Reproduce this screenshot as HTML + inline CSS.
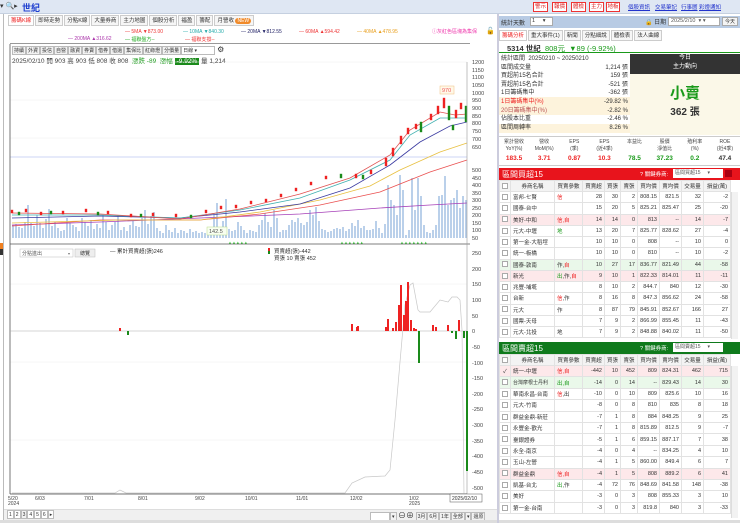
<!DOCTYPE html>
<html><head><meta charset="utf-8">
<style>
*{margin:0;padding:0;box-sizing:border-box}
body{width:740px;height:523px;overflow:hidden;background:#fff;font-family:"Liberation Sans","Noto Sans CJK TC",sans-serif;font-size:7px;color:#333;position:relative}
.a{position:absolute;white-space:nowrap}
.btn{position:absolute;top:2px;height:10px;border:1px solid #e33;background:#fff;color:#d22;font-size:5.5px;line-height:8px;text-align:center;overflow:hidden}
.lnk{position:absolute;top:3px;color:#2233cc;text-decoration:underline;font-size:5.5px}
.tab{display:inline-block;height:11px;line-height:10px;padding:0 2px;border:1px solid #ccc;background:#f6f6f6;font-size:5.5px;margin-right:1px}
.tb{display:inline-block;height:9px;line-height:8px;padding:0 1px;border:1px solid #bbb;background:#f2f2f2;font-size:5px}
table{border-collapse:collapse;table-layout:fixed;position:absolute;left:499px;width:231px;font-size:5.5px}
td{border:1px solid #e2e2e2;padding:0 2px;text-align:right;overflow:hidden;white-space:nowrap}
td.l{text-align:left}
td.c{text-align:center}
.th td{background:#f3f3f3;text-align:center;height:11px;padding:0}
.r{color:#e22}.g{color:#1a9a1a}
.pk td{background:#fde8ea}.gn td{background:#eaf8ea}
.cb{display:inline-block;width:6px;height:6px;border:1px solid #aaa;background:#fff;vertical-align:middle}
</style></head><body>
<div class="a" style="left:0;top:0;width:740px;height:14px;background:#dfe7f3;border-bottom:1px solid #c5d0e0"></div>
<div class="a" style="left:0;top:2px;font-size:7px">▾ 🔍▸</div>
<div class="a" style="left:22px;top:1px;color:#1f3fcf;font-size:9px;font-weight:bold">世紀</div>
<div class="btn" style="left:533px;width:15px">警示</div>
<div class="btn" style="left:552px;width:15px">報價</div>
<div class="btn" style="left:571px;width:15px">體檢</div>
<div class="btn" style="left:589px;width:15px">主力</div>
<div class="btn" style="left:606px;width:14px">地板</div>
<div class="lnk" style="left:628px">個股資訊</div>
<div class="lnk" style="left:655px">交易筆記</div>
<div class="lnk" style="left:681px">行事曆</div>
<div class="lnk" style="left:699px">彩燈通知</div>

<div class="a" style="left:3px;top:14px;width:1px;height:509px;background:#bbb"></div>
<div class="a" style="left:0;top:243px;width:3px;height:6px;background:#f08020"></div>
<div class="a" style="left:0;top:249px;width:3px;height:6px;background:#333"></div>
<div class="a" style="left:8px;top:15px"><span class="tab" style="color:#e22;background:#fff">籌碼K線</span><span class="tab">即時走勢</span><span class="tab">分點K線</span><span class="tab">大量券商</span><span class="tab">主力地圖</span><span class="tab">個股分析</span><span class="tab">福盈</span><span class="tab">籌配</span><span class="tab">月營收 <span style="background:#f08a2a;color:#fff;border-radius:4px;padding:0 2px;font-size:5px">NEW</span></span></div>
<div class="a" style="left:125px;top:29px;font-size:5px;color:#e33">— 5MA ▼873.00</div>
<div class="a" style="left:183px;top:29px;font-size:5px;color:#2aa">— 10MA ▼840.30</div>
<div class="a" style="left:241px;top:29px;font-size:5px;color:#226">— 20MA ▼812.55</div>
<div class="a" style="left:299px;top:29px;font-size:5px;color:#e33">— 60MA ▲594.42</div>
<div class="a" style="left:357px;top:29px;font-size:5px;color:#e9a020">— 40MA ▲478.95</div>
<div class="a" style="left:432px;top:28px;font-size:5px;color:#e3a">ⓘ灰紅色區塊為集保</div>
<div class="a" style="left:486px;top:27px;font-size:7px">🔓</div>
<div class="a" style="left:68px;top:36px;font-size:5px;color:#a3a">— 200MA ▲316.62</div>
<div class="a" style="left:125px;top:36px;font-size:5px;color:#2a2">— 福聯盤方--</div>
<div class="a" style="left:185px;top:36px;font-size:5px;color:#e33">— 福聯支撐--</div>
<div class="a" style="left:10px;top:43px;width:460px;height:1px;background:#999"></div>
<div class="a" style="left:12px;top:45px"><span class="tb">持續</span><span class="tb">外資</span><span class="tb">投信</span><span class="tb">自營</span><span class="tb">融資</span><span class="tb">券賣</span><span class="tb">借券</span><span class="tb">借還</span><span class="tb">集保比</span><span class="tb">紅綠燈</span><span class="tb">分價量</span><span class="tb" style="width:34px;background:#fff">日線 ▾</span> <span style="font-size:8px">⚙</span></div>
<div class="a" style="left:12px;top:55px;font-size:6.5px">2025/02/10 開 903 高 903 低 808 收 808 &nbsp;<span class="g">漲跌 -89 &nbsp;漲幅</span> <span style="background:#1a8a1a;color:#fff;padding:0 2px">-9.92%</span> 量 1,214</div>

<svg class="a" style="left:0;top:0" width="497" height="523">
<g stroke="#eee" stroke-width="0.5"><line x1="10" y1="62" x2="467" y2="62"/><line x1="10" y1="100" x2="467" y2="100"/><line x1="10" y1="138" x2="467" y2="138"/><line x1="10" y1="284" x2="467" y2="284"/><line x1="10" y1="362" x2="467" y2="362"/><line x1="10" y1="440" x2="467" y2="440"/></g>
<line x1="10" y1="157" x2="467" y2="157" stroke="#bcc8f0" stroke-width="0.7"/>
<path stroke="#a9c4e4" stroke-width="1.6" d="M13 238V225M16 238V224M19 238V227M22 238V228M25 238V222M28 238V205M31 238V223M34 238V226M37 238V215M40 238V223M43 238V228M46 238V219M49 238V209M52 238V226M55 238V222M58 238V228M61 238V231M64 238V230M67 238V218M70 238V223M73 238V225M76 238V227M79 238V231M82 238V218M85 238V222M88 238V226M91 238V220M94 238V229M97 238V224M100 238V228M103 238V215M106 238V222M109 238V230M112 238V225M115 238V222M118 238V215M121 238V230M124 238V227M127 238V231M130 238V225M133 238V221M136 238V226M139 238V227M142 238V218M145 238V210M148 238V224M151 238V216M154 238V212M157 238V228M160 238V231M163 238V233M166 238V225M169 238V230M172 238V232M175 238V228M178 238V233M181 238V230M184 238V231M187 238V233M190 238V229M193 238V232M196 238V231M199 238V233M202 238V232M205 238V233M208 238V231M211 238V229M214 238V215M217 238V203M220 238V228M223 238V221M226 238V199M229 238V229M232 238V231M235 238V230M238 238V222M241 238V226M244 238V230M247 238V233M250 238V230M253 238V231M256 238V232M259 238V225M262 238V220M265 238V213M268 238V222M271 238V227M274 238V210M277 238V218M280 238V232M283 238V230M286 238V230M289 238V225M292 238V220M295 238V222M298 238V218M301 238V223M304 238V225M307 238V222M310 238V210M313 238V215M316 238V207M319 238V221M322 238V229M325 238V230M328 238V232M331 238V231M334 238V229M337 238V228M340 238V229M343 238V227M346 238V231M349 238V229M352 238V223M355 238V226M358 238V220M361 238V228M364 238V226M367 238V230M370 238V230M373 238V229M376 238V221M379 238V228M382 238V233M385 238V224M388 238V185M391 238V200M394 238V205M397 238V215M400 238V175M403 238V190M406 238V235M409 238V230M412 238V178M415 238V210M418 238V178M421 238V196M424 238V225M427 238V232M430 238V233M433 238V230M436 238V225M439 238V196M442 238V195M445 238V176M448 238V205M451 238V200M454 238V198M457 238V190M460 238V208M463 238V196M466 238V200"/>
<polyline fill="none" stroke="#a640b8" stroke-width="0.8" points="12,225 100,222 200,218 300,214 380,208 430,205 467,203"/>
<polyline fill="none" stroke="#ea5050" stroke-width="0.8" points="12,226 100,220 200,220 260,214 320,205 380,192 430,172 467,160"/>
<polyline fill="none" stroke="#e8c040" stroke-width="0.8" points="12,223 120,220 200,220 260,212 320,200 370,186 400,170 440,152 467,143"/>
<polyline fill="none" stroke="#3a3aa0" stroke-width="0.8" points="12,218 100,216 180,218 240,212 300,204 350,188 390,165 420,142 450,126 467,122"/>
<polyline fill="none" stroke="#40b0b0" stroke-width="0.8" points="12,215 100,215 180,218 240,210 300,198 350,180 390,160 410,135 440,118 467,118"/>
<polyline fill="none" stroke="#e05050" stroke-width="0.8" points="12,213 100,214 180,219 240,209 300,194 350,178 390,155 410,130 440,112 455,115 467,114"/>
<g fill="#e22" stroke="#e22" stroke-width="0.4">
<rect x="11" y="210" width="2" height="3"/><rect x="25" y="209" width="2" height="3"/><rect x="40" y="212" width="2" height="3"/><rect x="62" y="211" width="2" height="3"/><rect x="85" y="209" width="2" height="3"/><rect x="107" y="211" width="2" height="3"/><rect x="130" y="214" width="2" height="3"/><rect x="152" y="213" width="2" height="3"/><rect x="175" y="214" width="2" height="3"/><rect x="205" y="210" width="2" height="3"/><rect x="220" y="206" width="2" height="3"/><rect x="235" y="205" width="2" height="3"/><rect x="250" y="201" width="2" height="3"/><rect x="265" y="199" width="2" height="3"/><rect x="280" y="194" width="2" height="3"/><rect x="295" y="188" width="2" height="3"/><rect x="310" y="182" width="2" height="3"/><rect x="325" y="176" width="2" height="3"/><rect x="355" y="174" width="2" height="4"/><rect x="370" y="170" width="2" height="4"/><rect x="385" y="158" width="2" height="8"/><rect x="392" y="148" width="2" height="8"/><rect x="400" y="136" width="2" height="8"/><rect x="407" y="128" width="2" height="6"/><rect x="415" y="124" width="2" height="5"/><rect x="430" y="114" width="2" height="6"/><rect x="437" y="106" width="2" height="8"/><rect x="443" y="98" width="2" height="10"/><rect x="455" y="110" width="2" height="8"/><rect x="460" y="103" width="2" height="6"/>
</g>
<g fill="#1a8a1a" stroke="#1a8a1a" stroke-width="0.4">
<rect x="18" y="212" width="2" height="3"/><rect x="50" y="211" width="2" height="3"/><rect x="97" y="212" width="2" height="3"/><rect x="140" y="214" width="2" height="3"/><rect x="190" y="215" width="2" height="3"/><rect x="340" y="174" width="2" height="4"/><rect x="362" y="175" width="2" height="4"/><rect x="420" y="122" width="2" height="10"/><rect x="448" y="106" width="2" height="14"/><rect x="452" y="125" width="2" height="5"/><rect x="465" y="106" width="2" height="16"/>
</g>
<rect x="440" y="86" width="14" height="8" fill="#fff8e8" stroke="#f0c080" stroke-width="0.5"/><text x="442" y="92" font-size="5.5" fill="#e55">970</text>
<rect x="207" y="227" width="20" height="8" fill="#f8fff0" stroke="#bd8" stroke-width="0.5"/><text x="209" y="233" font-size="5.5" fill="#555">142.5</text>
<g fill="#3c3" font-size="4"><text x="228" y="244">▲▲▲▲▲</text><text x="340" y="244">▲▲▲▲▲▲</text><text x="400" y="244">▲▲▲▲▲▲▲</text></g>
<line x1="10" y1="244" x2="470" y2="244" stroke="#555" stroke-width="0.8"/>
<line x1="467" y1="62" x2="467" y2="494" stroke="#999" stroke-width="0.6"/>
<line x1="10" y1="44" x2="10" y2="494" stroke="#555" stroke-width="0.8"/>
<line x1="10" y1="494" x2="467" y2="494" stroke="#444" stroke-width="0.8"/>
<g font-size="5.5" fill="#444">
<text x="472" y="64">1200</text><text x="472" y="72">1150</text><text x="472" y="79">1100</text><text x="472" y="87">1050</text><text x="472" y="95">1000</text><text x="472" y="102">950</text><text x="472" y="110">900</text><text x="472" y="118">850</text><text x="472" y="125">800</text><text x="472" y="133">750</text><text x="472" y="141">700</text><text x="472" y="149">650</text><text x="472" y="172">500</text><text x="472" y="180">450</text><text x="472" y="187">400</text><text x="472" y="195">350</text><text x="472" y="202">300</text><text x="472" y="210">250</text><text x="472" y="217">200</text><text x="472" y="225">150</text><text x="472" y="232">100</text><text x="472" y="240">50</text>
<text x="472" y="255">250</text><text x="472" y="271">200</text><text x="472" y="286">150</text><text x="472" y="302">100</text><text x="472" y="318">50</text><text x="472" y="333">0</text><text x="472" y="349">-50</text><text x="472" y="365">-100</text><text x="472" y="380">-150</text><text x="472" y="396">-200</text><text x="472" y="411">-250</text><text x="472" y="427">-300</text><text x="472" y="443">-350</text><text x="472" y="458">-400</text><text x="472" y="474">-450</text><text x="472" y="490">-500</text>
</g>
<line x1="10" y1="331" x2="467" y2="331" stroke="#aaa" stroke-width="0.6"/>
<polyline fill="none" stroke="#c8c8c8" stroke-width="0.7" points="12,493 115,493 120,490 126,493 345,493 352,483 365,477 385,476 390,470 395,420 400,362 405,305 410,285 413,283 418,310 420,312 430,312 440,300 448,302 452,297 457,297 460,300 462,330 464,494"/>
<g fill="#e22"><rect x="119" y="328" width="2" height="3"/><rect x="351" y="324" width="2" height="7"/><rect x="356" y="327" width="2" height="4"/><rect x="357" y="326" width="2" height="5"/><rect x="385" y="327" width="2" height="4"/><rect x="387" y="319" width="2" height="12"/><rect x="392" y="328" width="2" height="3"/><rect x="395" y="322" width="2" height="9"/><rect x="398" y="305" width="2" height="26"/><rect x="400" y="285" width="2" height="46"/><rect x="403" y="315" width="2" height="16"/><rect x="405" y="301" width="2" height="30"/><rect x="407" y="282" width="2" height="49"/><rect x="410" y="320" width="2" height="11"/><rect x="413" y="328" width="2" height="3"/><rect x="415" y="329" width="2" height="2"/><rect x="432" y="325" width="2" height="6"/><rect x="435" y="327" width="2" height="4"/><rect x="447" y="325" width="2" height="6"/><rect x="458" y="320" width="2" height="11"/></g>
<g fill="#1a8a1a"><rect x="127" y="331" width="2" height="4"/><rect x="418" y="331" width="2" height="32"/><rect x="451" y="331" width="2" height="2"/><rect x="455" y="331" width="2" height="8"/><rect x="463" y="331" width="2" height="7"/><rect x="466" y="331" width="2" height="140"/></g>
<rect x="20" y="249" width="53" height="8" fill="#fff" stroke="#bbb" stroke-width="0.5"/><text x="22" y="255" font-size="5" fill="#555">分點進出</text><text x="68" y="255" font-size="4" fill="#777">▾</text>
<rect x="75" y="249" width="20" height="8" fill="#eee" stroke="#bbb" stroke-width="0.5"/><text x="80" y="255" font-size="5" fill="#333">總覽</text>
<text x="110" y="253" font-size="5.5" fill="#333">— 累計買賣超(張)246</text>
<rect x="268" y="248" width="2" height="3" fill="#e22"/><rect x="268" y="251" width="2" height="3" fill="#1a8a1a"/>
<text x="274" y="253" font-size="5.5" fill="#333">買賣超(張)-442</text><text x="274" y="260" font-size="5.5" fill="#333">買張 10 賣張 452</text>
<g font-size="5" fill="#444"><text x="8" y="500">5/20</text><text x="8" y="505">2024</text><text x="35" y="500">6/03</text><text x="84" y="500">7/01</text><text x="138" y="500">8/01</text><text x="195" y="500">9/02</text><text x="245" y="500">10/01</text><text x="296" y="500">11/01</text><text x="350" y="500">12/02</text><text x="409" y="500">1/02</text><text x="409" y="505">2025</text></g>
<rect x="450" y="494" width="32" height="8" fill="#fff" stroke="#555" stroke-width="0.5"/><text x="452" y="500" font-size="5" fill="#333">2025/02/10</text>
</svg>
<div class="a" style="left:4px;top:509px;width:493px;height:12px;background:#f0f0f0;border-top:1px solid #ddd"></div>
<div class="a" style="left:7px;top:510px;font-size:5.5px"><span class="tb" style="background:#fff">1</span><span class="tb" style="background:#fff">2</span><span class="tb">3</span><span class="tb" style="background:#fff">4</span><span class="tb" style="background:#fff">5</span><span class="tb" style="background:#fff">6</span><span class="tb" style="background:#fff">▸</span></div>
<div class="a" style="left:370px;top:510px;font-size:5.5px"><span class="tb" style="width:20px;background:#fff">&nbsp;</span><span class="tb">▾</span> <span style="font-size:8px">⊖⊕</span> <span class="tb">3月</span><span class="tb">6月</span><span class="tb">1年</span><span class="tb">全部</span><span class="tb">▾</span><span class="tb">還原</span></div>
<div class="a" style="left:0;top:520px;width:740px;height:3px;background:#ddd"></div>
<div class="a" style="left:497px;top:14px;width:2px;height:509px;background:#ccd"></div>

<div class="a" style="left:499px;top:16px;width:241px;height:12px;background:#b8cbe4"></div>
<div class="a" style="left:501px;top:18px;font-size:6px">統計天數</div>
<div class="a" style="left:530px;top:17px;width:23px;height:9px;background:#fff;border:1px solid #aaa;font-size:5.5px;padding-left:1px">1 &nbsp; &nbsp; ▾</div>
<div class="a" style="left:645px;top:17px;font-size:6px">🔒 日期</div>
<div class="a" style="left:668px;top:17px;width:52px;height:9px;background:#fff;border:1px solid #aaa;font-size:5.5px;padding-left:2px;color:#555">2025/2/10 &nbsp;▾ ▾</div>
<div class="a" style="left:722px;top:17px;width:16px;height:9px;background:#f4f4f4;border:1px solid #aaa;font-size:5px;text-align:center">今天</div>
<div class="a" style="left:499px;top:30px"><span class="tab" style="color:#e22;background:#fff">籌碼分析</span><span class="tab">重大事件(1)</span><span class="tab">新聞</span><span class="tab">分點細說</span><span class="tab">體檢表</span><span class="tab">法人曲線</span></div>
<div class="a" style="left:499px;top:42px;width:241px;height:11px;border-bottom:1.5px solid #1a9a1a"></div>
<div class="a" style="left:507px;top:43px;font-size:7.5px;font-weight:bold;color:#333">5314 世紀 &nbsp;<span class="g" style="font-weight:normal">808元 &nbsp;▼89 (-9.92%)</span></div>
<div class="a" style="left:499px;top:97px;width:131px;height:9px;background:#fdf3dc"></div>
<div class="a" style="left:499px;top:106px;width:131px;height:9px;background:#fdf3dc"></div>
<div class="a" style="left:499px;top:124px;width:131px;height:9px;background:#fdf3dc"></div>
<div class="a" style="left:501px;top:55px;font-size:6px;line-height:8.6px">統計區間 &nbsp;20250210 ~ 20250210<br>區間成交量<br>買超前15名合計<br>賣超前15名合計<br>1日籌碼集中<br><span class="r">1日籌碼集中(%)</span><br><span style="color:#b55">20日籌碼集中(%)</span><br>佔股本比重<br>區間周轉率</div>
<div class="a" style="left:578px;top:55px;width:50px;text-align:right;font-size:6px;line-height:8.6px"><br>1,214 張<br>159 張<br>-521 張<br>-362 張<br>-29.82 %<br>-2.82 %<br>-2.46 %<br>8.26 %</div>
<div class="a" style="left:630px;top:54px;width:110px;height:20px;background:#333;color:#fff;text-align:center;font-size:6px;line-height:9px">今日<br>主力動向</div>
<div class="a" style="left:630px;top:74px;width:110px;height:61px;background:#fbf8e8;text-align:center"><div style="color:#1a9a1a;font-size:15px;margin-top:8px;font-weight:bold">小賣</div><div style="font-size:10px;font-weight:bold;color:#333">362 張</div></div>
<div class="a" style="left:499px;top:136px;width:241px;height:30px;border-top:1px solid #ccc;border-bottom:1px solid #ccc"></div>
<div class="a" style="left:499px;top:139px;width:241px;display:flex;font-size:5px;text-align:center;color:#444;line-height:7px">
<div style="flex:1">累計營收<br>YoY(%)</div><div style="flex:1">營收<br>MoM(%)</div><div style="flex:1">EPS<br>(季)</div><div style="flex:1">EPS<br>(近4季)</div><div style="flex:1">本益比<br>&nbsp;</div><div style="flex:1">股價<br>淨值比</div><div style="flex:1">殖利率<br>(%)</div><div style="flex:1">ROE<br>(近4季)</div></div>
<div class="a" style="left:499px;top:155px;width:241px;display:flex;font-size:6.5px;font-weight:bold;text-align:center">
<div style="flex:1" class="r">183.5</div><div style="flex:1" class="r">3.71</div><div style="flex:1" class="r">0.87</div><div style="flex:1" class="r">10.3</div><div style="flex:1" class="g">78.5</div><div style="flex:1" class="g">37.23</div><div style="flex:1" class="g">0.2</div><div style="flex:1">47.4</div></div>

<div class="a" style="left:499px;top:168px;width:241px;height:12px;background:#e8141c"></div>
<div class="a" style="left:502px;top:169px;color:#fff;font-size:8px">區間買超15</div>
<div class="a" style="left:640px;top:170px;color:#fff;font-size:5.5px">? 關鍵券商:</div>
<div class="a" style="left:673px;top:169px;width:50px;height:9px;background:#fff;font-size:5px;color:#555;padding-left:2px">區間買超15 &nbsp; &nbsp; ▾</div>
<div class="a" style="left:725px;top:170px;width:7px;height:7px;background:#a01"></div>

<table style="top:180px">
<colgroup><col style="width:11px"><col style="width:44px"><col style="width:28px"><col style="width:22px"><col style="width:16px"><col style="width:17px"><col style="width:22px"><col style="width:22px"><col style="width:22px"><col style="width:27px"></colgroup>
<tr class="th"><td><span class="cb"></span></td><td>券商名稱</td><td>買賣參數</td><td>買賣超</td><td>買張</td><td>賣張</td><td>買均價</td><td>賣均價</td><td>交易量</td><td>損益(萬)</td></tr>
</table>
<table style="top:191px">
<colgroup><col style="width:11px"><col style="width:44px"><col style="width:28px"><col style="width:22px"><col style="width:16px"><col style="width:17px"><col style="width:22px"><col style="width:22px"><col style="width:22px"><col style="width:27px"></colgroup>
<tr style="height:11.25px"><td class="c"><span class="cb"></span></td><td class="l">富邦-七賢</td><td class="l r">信</td><td>28</td><td>30</td><td>2</td><td>808.15</td><td>821.5</td><td>32</td><td>-2</td></tr>
<tr style="height:11.25px"><td class="c"><span class="cb"></span></td><td class="l">國泰-台中</td><td></td><td>15</td><td>20</td><td>5</td><td>825.21</td><td>825.47</td><td>25</td><td>-20</td></tr>
<tr class="pk" style="height:11.25px"><td class="c"><span class="cb"></span></td><td class="l">美好-中和</td><td class="l r">信,自</td><td>14</td><td>14</td><td>0</td><td>813</td><td>--</td><td>14</td><td>-7</td></tr>
<tr style="height:11.25px"><td class="c"><span class="cb"></span></td><td class="l">元大-中壢</td><td class="l g">地</td><td>13</td><td>20</td><td>7</td><td>825.77</td><td>828.62</td><td>27</td><td>-4</td></tr>
<tr style="height:11.25px"><td class="c"><span class="cb"></span></td><td class="l">第一金-大稻埕</td><td></td><td>10</td><td>10</td><td>0</td><td>808</td><td>--</td><td>10</td><td>0</td></tr>
<tr style="height:11.25px"><td class="c"><span class="cb"></span></td><td class="l">統一-板橋</td><td></td><td>10</td><td>10</td><td>0</td><td>810</td><td>--</td><td>10</td><td>-2</td></tr>
<tr class="gn" style="height:11.25px"><td class="c"><span class="cb"></span></td><td class="l">國泰-敦南</td><td class="l">作,<span class="r">自</span></td><td>10</td><td>27</td><td>17</td><td>836.77</td><td>821.49</td><td>44</td><td>-58</td></tr>
<tr class="pk" style="height:11.25px"><td class="c"><span class="cb"></span></td><td class="l">新光</td><td class="l"><span class="g">出</span>,作,<span class="r">自</span></td><td>9</td><td>10</td><td>1</td><td>822.33</td><td>814.01</td><td>11</td><td>-11</td></tr>
<tr style="height:11.25px"><td class="c"><span class="cb"></span></td><td class="l">兆豐-埔墘</td><td></td><td>8</td><td>10</td><td>2</td><td>844.7</td><td>840</td><td>12</td><td>-30</td></tr>
<tr style="height:11.25px"><td class="c"><span class="cb"></span></td><td class="l">台新</td><td class="l"><span class="r">信</span>,作</td><td>8</td><td>16</td><td>8</td><td>847.3</td><td>856.62</td><td>24</td><td>-58</td></tr>
<tr style="height:11.25px"><td class="c"><span class="cb"></span></td><td class="l">元大</td><td class="l">作</td><td>8</td><td>87</td><td>79</td><td>845.91</td><td>852.67</td><td>166</td><td>27</td></tr>
<tr style="height:11.25px"><td class="c"><span class="cb"></span></td><td class="l">國票-天母</td><td></td><td>7</td><td>9</td><td>2</td><td>866.99</td><td>855.45</td><td>11</td><td>-43</td></tr>
<tr style="height:11.25px"><td class="c"><span class="cb"></span></td><td class="l">元大-北投</td><td class="l">地</td><td>7</td><td>9</td><td>2</td><td>848.88</td><td>840.02</td><td>11</td><td>-50</td></tr>
</table>
<div class="a" style="left:731px;top:192px;width:7px;height:147px;background:#f2f2f2;border-left:1px solid #ddd"></div>

<div class="a" style="left:499px;top:342px;width:241px;height:12px;background:#0f7a1c"></div>
<div class="a" style="left:502px;top:343px;color:#fff;font-size:8px">區間賣超15</div>
<div class="a" style="left:640px;top:344px;color:#fff;font-size:5.5px">? 關鍵券商:</div>
<div class="a" style="left:673px;top:343px;width:50px;height:9px;background:#fff;font-size:5px;color:#555;padding-left:2px">區間賣超15 &nbsp; &nbsp; ▾</div>
<table style="top:354px">
<colgroup><col style="width:11px"><col style="width:44px"><col style="width:28px"><col style="width:22px"><col style="width:16px"><col style="width:17px"><col style="width:22px"><col style="width:22px"><col style="width:22px"><col style="width:27px"></colgroup>
<tr class="th"><td><span class="cb"></span></td><td>券商名稱</td><td>買賣參數</td><td>買賣超</td><td>買張</td><td>賣張</td><td>買均價</td><td>賣均價</td><td>交易量</td><td>損益(萬)</td></tr>
</table>
<table style="top:365px">
<colgroup><col style="width:11px"><col style="width:44px"><col style="width:28px"><col style="width:22px"><col style="width:16px"><col style="width:17px"><col style="width:22px"><col style="width:22px"><col style="width:22px"><col style="width:27px"></colgroup>
<tr class="pk" style="height:11.4px"><td class="c">✓</td><td class="l">統一-中壢</td><td class="l r">信,自</td><td>-442</td><td>10</td><td>452</td><td>809</td><td>824.31</td><td>462</td><td>715</td></tr>
<tr class="gn" style="height:11.4px"><td class="c"><span class="cb"></span></td><td class="l" style="font-size:5px">台灣摩根士丹利</td><td class="l g">出,自</td><td>-14</td><td>0</td><td>14</td><td>--</td><td>829.43</td><td>14</td><td>30</td></tr>
<tr style="height:11.4px"><td class="c"><span class="cb"></span></td><td class="l">華南永昌-台南</td><td class="l"><span class="r">信</span>,出</td><td>-10</td><td>0</td><td>10</td><td>809</td><td>825.6</td><td>10</td><td>16</td></tr>
<tr style="height:11.4px"><td class="c"><span class="cb"></span></td><td class="l">元大-竹南</td><td></td><td>-8</td><td>0</td><td>8</td><td>810</td><td>835</td><td>8</td><td>18</td></tr>
<tr style="height:11.4px"><td class="c"><span class="cb"></span></td><td class="l">群益金鼎-新莊</td><td></td><td>-7</td><td>1</td><td>8</td><td>884</td><td>848.25</td><td>9</td><td>25</td></tr>
<tr style="height:11.4px"><td class="c"><span class="cb"></span></td><td class="l">永豐金-歡光</td><td></td><td>-7</td><td>1</td><td>8</td><td>815.89</td><td>812.5</td><td>9</td><td>-7</td></tr>
<tr style="height:11.4px"><td class="c"><span class="cb"></span></td><td class="l">臺銀證券</td><td></td><td>-5</td><td>1</td><td>6</td><td>859.15</td><td>887.17</td><td>7</td><td>38</td></tr>
<tr style="height:11.4px"><td class="c"><span class="cb"></span></td><td class="l">永全-南京</td><td></td><td>-4</td><td>0</td><td>4</td><td>--</td><td>834.25</td><td>4</td><td>10</td></tr>
<tr style="height:11.4px"><td class="c"><span class="cb"></span></td><td class="l">玉山-左營</td><td></td><td>-4</td><td>1</td><td>5</td><td>860.00</td><td>849.4</td><td>6</td><td>7</td></tr>
<tr class="pk" style="height:11.4px"><td class="c"><span class="cb"></span></td><td class="l">群益金鼎</td><td class="l r">信,自</td><td>-4</td><td>1</td><td>5</td><td>808</td><td>889.2</td><td>6</td><td>41</td></tr>
<tr style="height:11.4px"><td class="c"><span class="cb"></span></td><td class="l">凱基-台北</td><td class="l"><span class="g">出</span>,作</td><td>-4</td><td>72</td><td>76</td><td>848.69</td><td>841.58</td><td>148</td><td>-38</td></tr>
<tr style="height:11.4px"><td class="c"><span class="cb"></span></td><td class="l">美好</td><td></td><td>-3</td><td>0</td><td>3</td><td>808</td><td>855.33</td><td>3</td><td>10</td></tr>
<tr style="height:11.4px"><td class="c"><span class="cb"></span></td><td class="l">第一金-台南</td><td></td><td>-3</td><td>0</td><td>3</td><td>819.8</td><td>840</td><td>3</td><td>-33</td></tr>
</table>
<div class="a" style="left:731px;top:366px;width:7px;height:152px;background:#f2f2f2;border-left:1px solid #ddd"></div>
</body></html>
